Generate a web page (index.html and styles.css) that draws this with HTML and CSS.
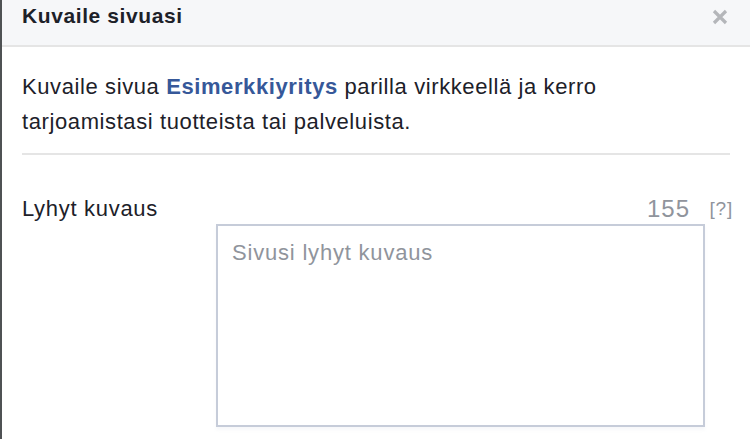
FILE: index.html
```html
<html lang="fi">
<head>
    <meta charset="UTF-8">
    <meta name="viewport" content="width=device-width,initial-scale=1">
    <title>Kuvaile sivuasi</title>
    <link rel="stylesheet" href="styles.css">
</head>
<body>
<div class="dialog">
    <!-- Title bar -->
    <header class="dlg-head">
        <h1>Kuvaile sivuasi</h1>
        <button class="dlg-close" aria-label="Sulje">
            <svg width="16" height="16" viewBox="0 0 16 16"><path d="M2 2L14 14M14 2L2 14" stroke="#b4b6ba" stroke-width="3.2" fill="none"/></svg>
        </button>
    </header>

    <main class="dlg-body">
        <p class="intro">Kuvaile sivua <a href="#">Esimerkkiyritys</a> parilla virkkeellä ja kerro tarjoamistasi tuotteista tai palveluista.</p>
        <hr class="sep">

        <!-- Short description field -->
        <div class="field">
            <label class="field-label" for="short-desc">Lyhyt kuvaus</label>
            <span class="counter">155</span>
            <span class="help">[?]</span>
            <textarea id="short-desc" class="field-input" placeholder="Sivusi lyhyt kuvaus"></textarea>
        </div>
    </main>
</div>
</body>
</html>
```

FILE: styles.css
```css
:root{
    --c-text:#1d2129;
    --c-link:#365899;
    --c-muted:#90949c;
    --c-line:#e5e5e5;
    --c-head:#f6f7f9;
    --c-input:#c6ccd9;
}
*{box-sizing:border-box;margin:0;padding:0}
body{background:#fff;font-family:"Liberation Sans",Arial,Helvetica,sans-serif;color:var(--c-text)}
.dialog{min-height:100vh;border-left:2px solid #4f5254;background:#fff}
.dlg-head{height:47px;background:var(--c-head);border-bottom:2px solid var(--c-line);display:flex;justify-content:space-between;align-items:flex-start;padding:3px 20px 0 20px}
.dlg-head h1{font-size:21px;line-height:26px;font-weight:700;letter-spacing:.6px;color:var(--c-text)}
.dlg-close{background:none;border:none;padding:6px 0 0;cursor:pointer;margin-right:2px}
.dlg-body{padding:22px 20px 0 20px}
.intro{max-width:640px;font-size:22px;line-height:35px;letter-spacing:.6px}
.intro a{color:var(--c-link);font-weight:700;text-decoration:none}
.sep{border:none;border-top:2px solid var(--c-line);margin:14px 0 0}
.field{display:grid;grid-template-columns:194px 489px 1fr;grid-template-rows:auto auto;margin-top:39px}
.field-label{grid-column:1;grid-row:1;font-size:22px;line-height:30px;letter-spacing:.7px;color:var(--c-text)}
.counter{grid-column:2;grid-row:1;justify-self:end;padding-right:15px;font-size:24px;line-height:30px;letter-spacing:1px;color:var(--c-muted)}
.help{grid-column:3;grid-row:1;justify-self:end;margin-right:-3px;font-size:19px;line-height:30px;letter-spacing:.8px;color:var(--c-muted)}
.field-input{grid-column:2;grid-row:2;height:203px;border:2px solid var(--c-input);padding:12px 14px;font-family:inherit;font-size:22px;line-height:30px;letter-spacing:.8px;resize:none;color:var(--c-text);box-shadow:0 3px 3px rgba(200,210,220,.15)}
.field-input::placeholder{color:var(--c-muted)}
```
